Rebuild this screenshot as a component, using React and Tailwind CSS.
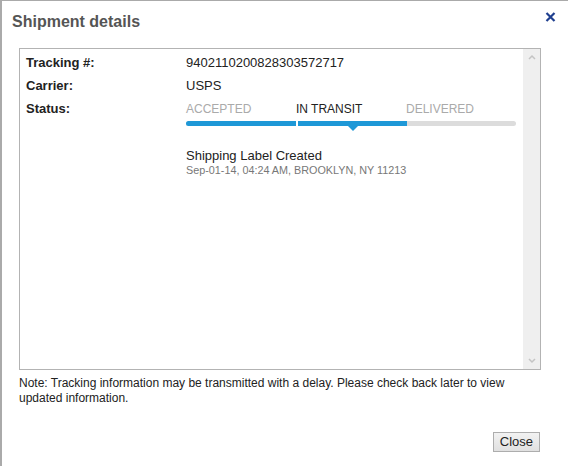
import React from 'react';

const steps = [
  { label: 'ACCEPTED', active: false },
  { label: 'IN TRANSIT', active: true },
  { label: 'DELIVERED', active: false },
];

const Row = ({ label, children }) => (
  <div className="flex h-[23px] items-center">
    <div className="w-[160px] font-bold text-[13px] text-[#222]">{label}</div>
    <div className="flex-1 text-[13px] text-[#222]">{children}</div>
  </div>
);

const ShipmentDetails = () => {
  return (
    <div
      className="relative h-[466px] w-[568px] border-l-2 border-t border-[#aaa] bg-white"
      style={{ fontFamily: 'Arial, "Liberation Sans", sans-serif' }}
    >
      <div className="flex h-[47px] items-start justify-between">
        <h1 className="ml-[10px] mt-[9px] text-[16px] font-bold text-[#555]">Shipment details</h1>
        <button className="mr-[12px] mt-[11px]">
          <svg width="11" height="10" viewBox="0 0 11 10">
            <path d="M1.5 1 L9.5 9 M9.5 1 L1.5 9" stroke="#1f3f8f" strokeWidth="2.2" />
          </svg>
        </button>
      </div>

      <div className="ml-[17px] flex h-[322px] w-[522px] border border-[#b3b3b3]">
        <div className="flex-1 pl-[6px] pt-[2px]">
          <Row label="Tracking #:">9402110200828303572717</Row>
          <Row label="Carrier:">USPS</Row>
          <div className="flex">
            <div className="flex h-[23px] w-[160px] items-center pt-[1px] font-bold text-[13px] text-[#222]">Status:</div>
            <div className="w-[330px]">
              <div className="flex h-[23px] items-center pt-[1px] text-[12px]">
                {steps.map((s) => (
                  <div
                    key={s.label}
                    className={`w-[110px] ${s.active ? 'text-[#222]' : 'text-[#aaa]'}`}
                  >
                    {s.label}
                  </div>
                ))}
              </div>
              <div className="relative mt-[1px] flex h-[5px] w-[330px] overflow-hidden rounded-full bg-[#dcdcdc]">
                <div className="h-full w-[110px] bg-[#1e98d7]" />
                <div className="h-full w-[2px] bg-white" />
                <div className="h-full w-[109px] bg-[#1e98d7]" />
              </div>
              <div className="ml-[162px] h-0 w-0 border-x-[5px] border-t-[5px] border-x-transparent border-t-[#1e98d7]" />
              <div className="mt-[17px] text-[13px] leading-[15px] text-[#222]">Shipping Label Created</div>
              <div className="text-[10.8px] leading-[14px] text-[#777]">Sep-01-14, 04:24 AM, BROOKLYN, NY 11213</div>
            </div>
          </div>
        </div>
        <div className="flex w-[17px] flex-col items-center justify-between bg-[#efefef] py-[5px]">
          <svg width="8" height="6" viewBox="0 0 8 6">
            <path d="M1 5 L4 2 L7 5" stroke="#c4c4c4" strokeWidth="1.5" fill="none" />
          </svg>
          <svg width="8" height="6" viewBox="0 0 8 6">
            <path d="M1 1 L4 4 L7 1" stroke="#c4c4c4" strokeWidth="1.5" fill="none" />
          </svg>
        </div>
      </div>

      <p className="ml-[17px] mt-[6px] w-[530px] text-[12px] leading-[15px] text-[#222]">
        Note: Tracking information may be transmitted with a delay. Please check back later to view updated information.
      </p>

      <div className="absolute bottom-[13px] right-[28px]">
        <button className="h-[20px] border border-[#adadad] bg-gradient-to-b from-[#f2f2f2] to-[#e0e0e0] px-[6px] text-[13px] leading-[18px] text-[#222]">
          Close
        </button>
      </div>
    </div>
  );
};

export default function App() {
  return <ShipmentDetails />;
}
